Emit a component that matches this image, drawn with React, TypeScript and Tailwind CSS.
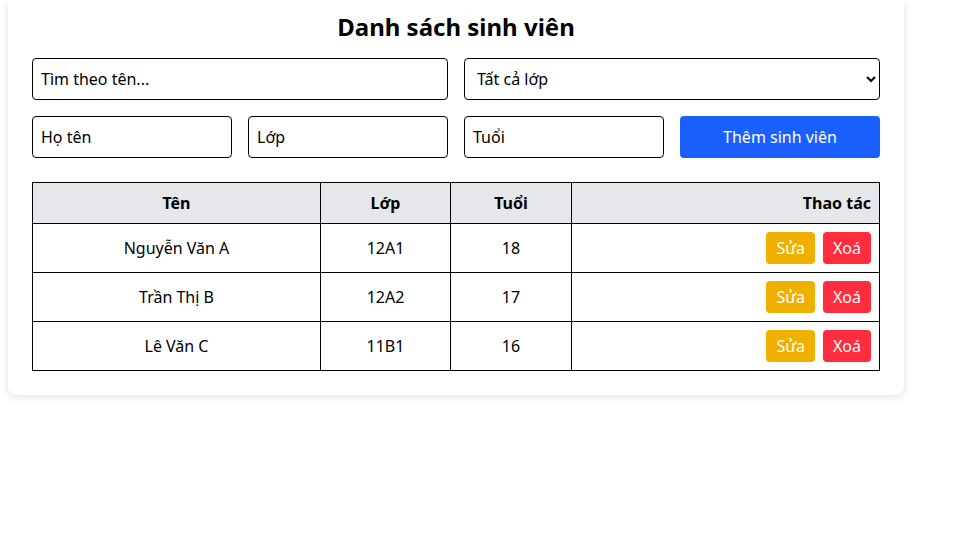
import React from "react";

const students = [
  { name: "Nguyễn Văn A", cls: "12A1", age: 18 },
  { name: "Trần Thị B", cls: "12A2", age: 17 },
  { name: "Lê Văn C", cls: "11B1", age: 16 },
];

export default function App() {
  return (
    <div className="min-h-[540px] bg-white font-['Segoe_UI','Noto_Sans',sans-serif] text-black">
      <div className="ml-2 w-[896px] rounded-b-lg bg-white px-6 pb-6 pt-[10px] shadow-[0_2px_8px_rgba(0,0,0,0.12)]">
        <h2 className="mb-[14px] text-center text-2xl font-bold leading-[34px]">Danh sách sinh viên</h2>

        <div className="grid grid-cols-4 gap-4">
          <input
            className="col-span-2 h-[42px] rounded border border-black px-2 text-base outline-none placeholder:text-black"
            placeholder="Tìm theo tên..."
          />
          <select className="col-span-2 h-[42px] rounded border border-black bg-white px-2 text-base outline-none">
            <option>Tất cả lớp</option>
            <option>12A1</option>
            <option>12A2</option>
            <option>11B1</option>
          </select>
          <input
            className="h-[42px] rounded border border-black px-2 text-base outline-none placeholder:text-black"
            placeholder="Họ tên"
          />
          <input
            className="h-[42px] rounded border border-black px-2 text-base outline-none placeholder:text-black"
            placeholder="Lớp"
          />
          <input
            className="h-[42px] rounded border border-black px-2 text-base outline-none placeholder:text-black"
            placeholder="Tuổi"
          />
          <button className="h-[42px] rounded bg-[#1a5fff] text-base text-white">Thêm sinh viên</button>
        </div>

        <table className="mt-6 w-full border-collapse text-base">
          <thead>
            <tr className="h-[41px] bg-[#e5e7eb]">
              <th className="w-[288px] border border-black px-2 text-center font-bold">Tên</th>
              <th className="w-[130px] border border-black px-2 text-center font-bold">Lớp</th>
              <th className="w-[121px] border border-black px-2 text-center font-bold">Tuổi</th>
              <th className="border border-black px-2 text-right font-bold">Thao tác</th>
            </tr>
          </thead>
          <tbody>
            {students.map((s) => (
              <tr key={s.name} className="h-[49px]">
                <td className="border border-black px-2 text-center">{s.name}</td>
                <td className="border border-black px-2 text-center">{s.cls}</td>
                <td className="border border-black px-2 text-center">{s.age}</td>
                <td className="border border-black px-2 text-right">
                  <button className="h-8 rounded bg-[#f0b000] px-[10px] text-white">Sửa</button>
                  <button className="ml-2 h-8 rounded bg-[#ff2d3d] px-[10px] text-white">Xoá</button>
                </td>
              </tr>
            ))}
          </tbody>
        </table>
      </div>
    </div>
  );
}
